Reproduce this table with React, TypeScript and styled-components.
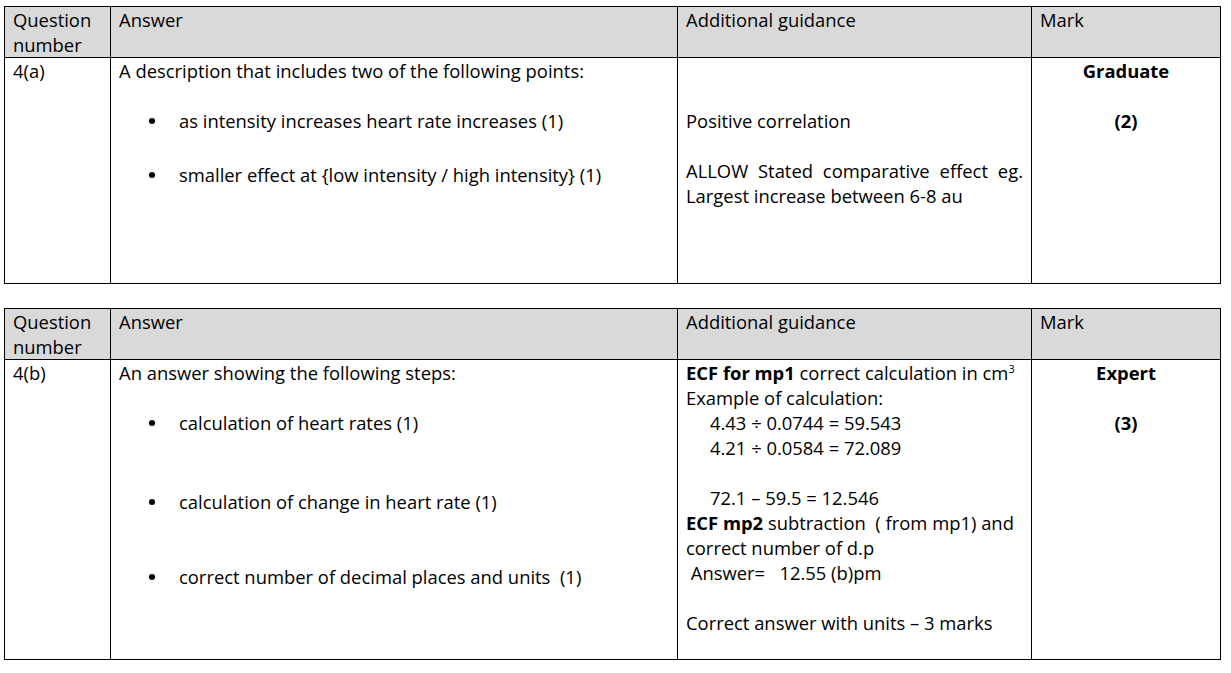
import React from "react"
import styled, { createGlobalStyle } from "styled-components"

const GlobalStyle = createGlobalStyle`
  body {
    margin: 0;
    background: #fff;
    font-family: "Open Sans", "Noto Sans", Arial, sans-serif;
    color: #000;
  }
`

const Page = styled.div`
  display: flex;
  flex-direction: column;
  gap: 24px;
  padding: 6px 0 0 4px;
`

const Table = styled.div`
  display: grid;
  grid-template-columns: 106px 567px 354px 189px;
  width: 1217px;
  border-top: 1px solid #000;
  border-left: 1px solid #000;
  box-sizing: border-box;
`

const Cell = styled.div<{ $head?: boolean; $minH?: number; $center?: boolean }>`
  box-sizing: border-box;
  border-right: 1px solid #000;
  border-bottom: 1px solid #000;
  background: ${(p) => (p.$head ? "#d9d9d9" : "#fff")};
  padding: 0 8px;
  min-height: ${(p) => (p.$minH ? `${p.$minH}px` : "auto")};
  font-size: 18.4px;
  line-height: 25px;
  text-align: ${(p) => (p.$center ? "center" : "left")};
`

const Line = styled.div<{ $top?: number; $indent?: number }>`
  margin-top: ${(p) => p.$top ?? 0}px;
  padding-left: ${(p) => p.$indent ?? 0}px;
  min-height: 25px;
  white-space: pre;
`

const Para = styled.div<{ $top?: number }>`
  margin-top: ${(p) => p.$top ?? 0}px;
  text-align: justify;
`

const Bullet = styled.div<{ $top: number }>`
  display: flex;
  align-items: center;
  gap: 24px;
  margin-top: ${(p) => p.$top}px;
  padding-left: 30px;

  &::before {
    content: "";
    width: 6px;
    height: 6px;
    border-radius: 50%;
    background: #000;
    flex: none;
  }
`

const Bold = styled.b`
  font-weight: 700;
`

const Sup = styled.sup`
  font-size: 11px;
  line-height: 0;
`

const MarkLabel = styled.div<{ $top?: number }>`
  font-weight: 700;
  margin-top: ${(p) => p.$top ?? 0}px;
`

const Header = () => (
  <>
    <Cell $head>
      Question
      <br />
      number
    </Cell>
    <Cell $head>Answer</Cell>
    <Cell $head>Additional guidance</Cell>
    <Cell $head>Mark</Cell>
  </>
)

export default function App() {
  return (
    <Page>
      <GlobalStyle />
      <Table>
        <Header />
        <Cell $minH={226}>4(a)</Cell>
        <Cell>
          <Line>A description that includes two of the following points:</Line>
          <Bullet $top={25}>as intensity increases heart rate increases (1)</Bullet>
          <Bullet $top={29}>smaller effect at {"{"}low intensity / high intensity{"}"} (1)</Bullet>
        </Cell>
        <Cell>
          <Line $top={50}>Positive correlation</Line>
          <Para $top={25}>
            ALLOW Stated comparative effect eg. Largest increase between 6-8 au
          </Para>
        </Cell>
        <Cell $center>
          <MarkLabel>Graduate</MarkLabel>
          <MarkLabel $top={25}>(2)</MarkLabel>
        </Cell>
      </Table>

      <Table>
        <Header />
        <Cell $minH={300}>4(b)</Cell>
        <Cell>
          <Line>An answer showing the following steps:</Line>
          <Bullet $top={25}>calculation of heart rates (1)</Bullet>
          <Bullet $top={54}>calculation of change in heart rate (1)</Bullet>
          <Bullet $top={50}>correct number of decimal places and units&nbsp; (1)</Bullet>
        </Cell>
        <Cell>
          <Line>
            <Bold>ECF for mp1</Bold> correct calculation in cm<Sup>3</Sup>
          </Line>
          <Line>Example of calculation:</Line>
          <Line $indent={24}>4.43 ÷ 0.0744 = 59.543</Line>
          <Line $indent={24}>4.21 ÷ 0.0584 = 72.089</Line>
          <Line />
          <Line $indent={24}>72.1 – 59.5 = 12.546</Line>
          <Line>
            <Bold>ECF mp2</Bold> subtraction&nbsp; ( from mp1) and
          </Line>
          <Line>correct number of d.p</Line>
          <Line> Answer=&nbsp;&nbsp; 12.55 (b)pm</Line>
          <Line />
          <Line>Correct answer with units – 3 marks</Line>
        </Cell>
        <Cell $center>
          <MarkLabel>Expert</MarkLabel>
          <MarkLabel $top={25}>(3)</MarkLabel>
        </Cell>
      </Table>
    </Page>
  )
}
